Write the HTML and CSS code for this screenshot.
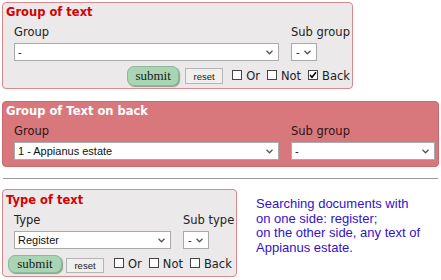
FILE: index.html
```html
<!DOCTYPE html>
<html lang="en">
<head>
  <meta charset="UTF-8">
  <title>Text search</title>
  <link rel="stylesheet" href="styles.css">
</head>
<body>
  <form class="panel panel-front">
    <div class="panel-title">Group of text</div>
    <div class="fields">
      <label class="lbl">Group</label>
      <label class="lbl">Sub group</label>
      <select class="sel sel-group"><option>-</option></select>
      <select class="sel sel-small"><option>-</option></select>
    </div>
    <div class="actions actions-right">
      <button type="button" class="btn-submit">submit</button>
      <button type="button" class="btn-reset">reset</button>
      <label class="chk"><span class="box"></span>Or</label>
      <label class="chk"><span class="box"></span>Not</label>
      <label class="chk"><span class="box"><svg width="8" height="8" viewBox="0 0 8 8"><path d="M1 4 L3 6.2 L7 1.2" fill="none" stroke="#000" stroke-width="1.6"/></svg></span>Back</label>
    </div>
  </form>

  <form class="panel panel-back">
    <div class="panel-title">Group of Text on back</div>
    <div class="fields fields-wide">
      <label class="lbl">Group</label>
      <label class="lbl">Sub group</label>
      <select class="sel sel-group"><option>1 - Appianus estate</option></select>
      <select class="sel sel-sub"><option>-</option></select>
    </div>
  </form>

  <hr class="sep">

  <div class="bottom">
    <form class="panel panel-type">
      <div class="panel-title">Type of text</div>
      <div class="fields fields-type">
        <label class="lbl">Type</label>
        <label class="lbl">Sub type</label>
        <select class="sel sel-type"><option>Register</option></select>
        <select class="sel sel-small"><option>-</option></select>
      </div>
      <div class="actions actions-left">
        <button type="button" class="btn-submit">submit</button>
        <button type="button" class="btn-reset">reset</button>
        <label class="chk"><span class="box"></span>Or</label>
        <label class="chk"><span class="box"></span>Not</label>
        <label class="chk"><span class="box"></span>Back</label>
      </div>
    </form>
    <p class="summary">Searching documents with<br>on one side: register;<br>on the other side, any text of<br>Appianus estate.</p>
  </div>
</body>
</html>
```

FILE: styles.css
```css
* {
  margin: 0;
  padding: 0;
  box-sizing: border-box;
}

body {
  padding: 2px;
  background-color: white;
  font-family: "DejaVu Sans", Verdana, sans-serif;
  font-size: 11.5px;
  color: #222;
}

.panel {
  border: 1px solid #d9888b;
  border-radius: 4px;
  background-color: #ebe9ea;
}

.panel-title {
  font-weight: bold;
  font-size: 11.5px;
  line-height: 19px;
  padding-left: 3px;
  color: #d60000;
}

.panel-front {
  width: 351px;
  height: 87px;
}

.panel-back {
  width: 437px;
  height: 66px;
  margin-top: 12px;
  background-color: #d9787c;
  border-color: #c9696d;
}

.panel-back .panel-title {
  color: white;
}

.panel-back .lbl {
  color: #2a1515;
}

.fields {
  display: grid;
  grid-template-columns: 265px auto;
  column-gap: 12px;
  padding: 2px 0 0 11px;
}

.fields-wide {
  grid-template-columns: 265px 144px;
}

.fields-type {
  grid-template-columns: 157px auto;
}

.lbl {
  line-height: 16px;
}

.sel {
  appearance: none;
  -webkit-appearance: none;
  margin-top: 3px;
  height: 18px;
  padding: 0 14px 0 3px;
  border: 1px solid #aaa;
  border-radius: 0;
  background: white url("data:image/svg+xml;utf8,<svg xmlns='http://www.w3.org/2000/svg' width='7' height='5'><path d='M0.5 0.8 L3.5 3.8 L6.5 0.8' fill='none' stroke='%23555' stroke-width='1.3'/></svg>") no-repeat right 5px center;
  font-family: "Liberation Sans", Arial, sans-serif;
  font-size: 11px;
  color: #111;
}

.sel-group {
  width: 265px;
}

.sel-small {
  width: 26px;
  padding-left: 4px;
}

.sel-sub {
  width: 144px;
}

.sel-type {
  width: 157px;
}

.actions {
  display: flex;
  align-items: center;
}

.actions-right {
  justify-content: flex-end;
  margin-top: 5px;
  padding-right: 2px;
  height: 20px;
}

.actions-left {
  margin-top: 6px;
  padding-left: 5px;
  height: 18px;
}

.btn-submit {
  width: 52px;
  height: 20px;
  border: 1px solid #8fb79a;
  border-radius: 7px;
  background-color: #a9d5b4;
  box-shadow: 1px 1px 1px #8a9e90;
  font-family: "Liberation Serif", "Times New Roman", serif;
  font-size: 13px;
  color: #1a1a1a;
}

.actions-left .btn-submit {
  width: 54px;
  height: 18px;
}

.btn-reset {
  width: 38px;
  height: 16px;
  margin-left: 6px;
  border: 1px solid #b5b5b5;
  background-color: #efefef;
  font-family: "Liberation Sans", Arial, sans-serif;
  font-size: 9.5px;
  color: #222;
}

.actions-left .btn-reset {
  margin-left: 4px;
  height: 15px;
  align-self: flex-end;
}

.chk {
  display: flex;
  align-items: center;
  gap: 4px;
  margin-left: 7px;
  line-height: 14px;
}

.actions-right .btn-reset + .chk {
  margin-left: 9px;
}

.actions-left .btn-reset + .chk {
  margin-left: 10px;
}

.box {
  display: inline-flex;
  align-items: center;
  justify-content: center;
  width: 10px;
  height: 10px;
  border: 1px solid #444;
  background-color: white;
  margin-bottom: 2px;
}

.sep {
  margin: 11px 0 0 1px;
  width: 435px;
  border: none;
  border-top: 1px solid #9a9a9a;
}

.bottom {
  display: flex;
  align-items: flex-start;
  margin-top: 10px;
}

.panel-type {
  width: 235px;
  height: 88px;
}

.panel-type .panel-title {
  line-height: 20px;
}

.summary {
  margin: 8px 0 0 19px;
  font-family: "Liberation Sans", Arial, sans-serif;
  font-size: 13px;
  line-height: 14.5px;
  color: #3311cc;
}
```
